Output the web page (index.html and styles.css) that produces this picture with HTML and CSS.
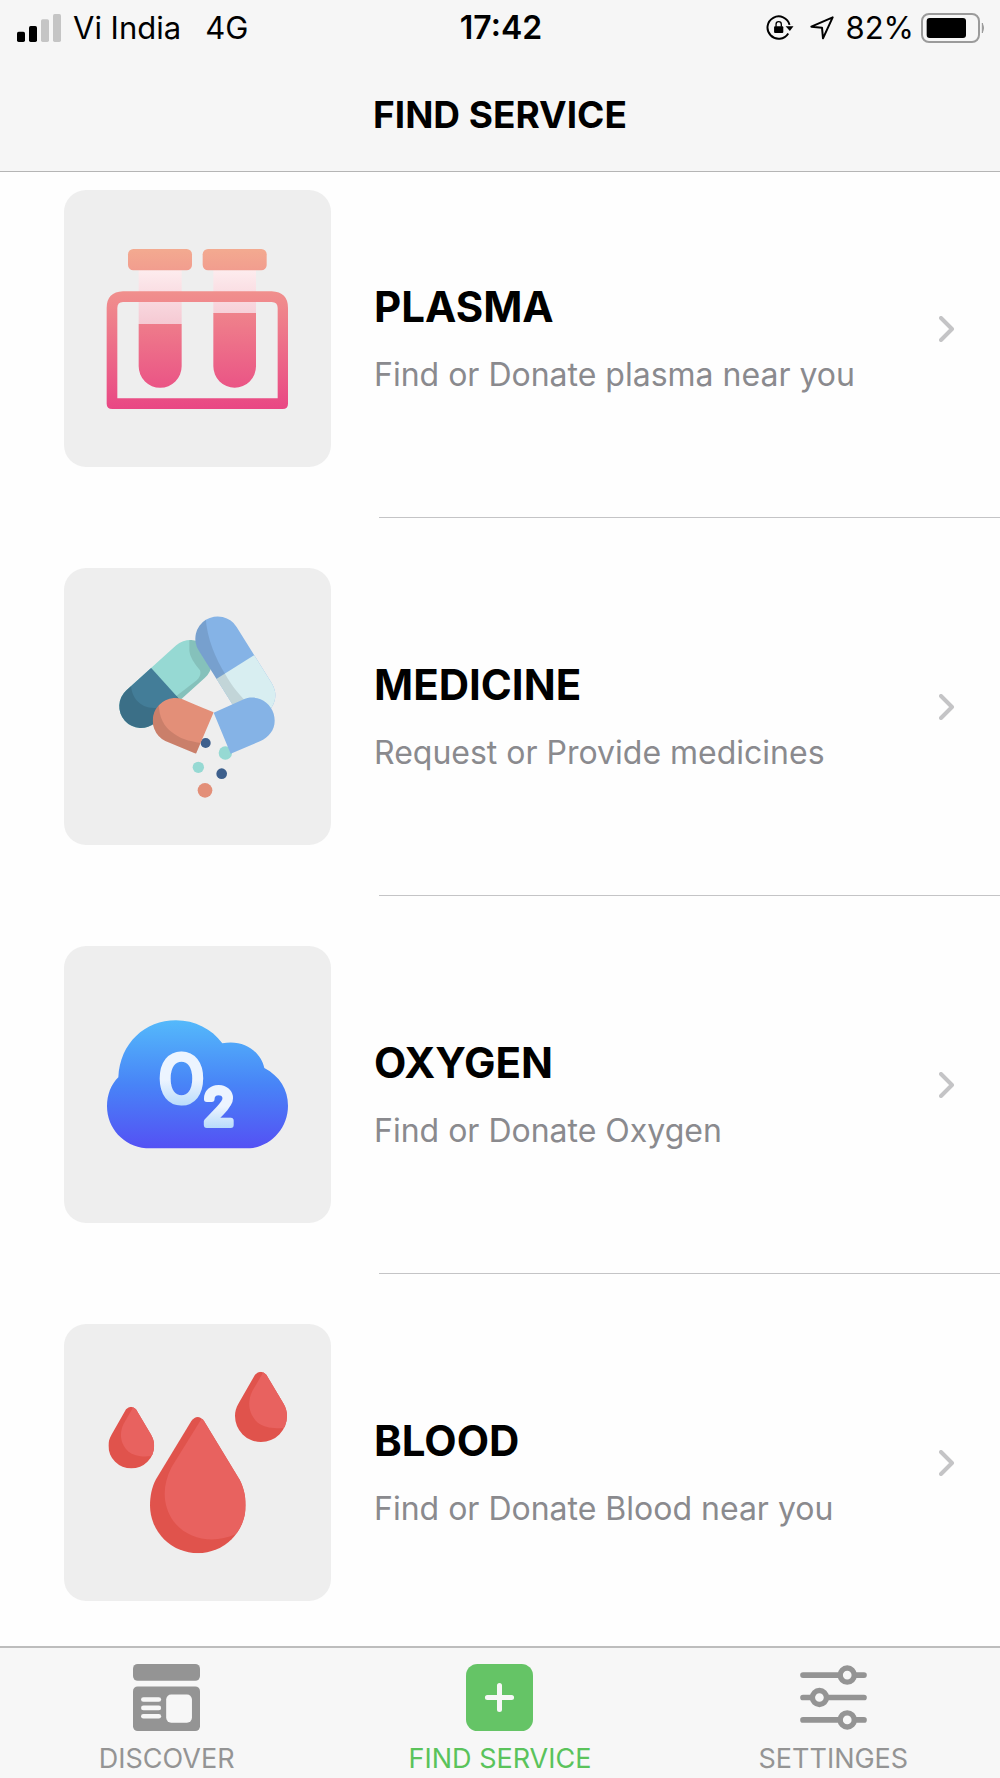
FILE: index.html
```html
<!DOCTYPE html>
<html lang="en">
<head>
<meta charset="utf-8">
<meta name="viewport" content="width=device-width, initial-scale=1">
<title>Find Service</title>
<link rel="stylesheet" href="styles.css">
</head>
<body>
<header class="header">
  <div class="status">
    <div class="status-left">
      <svg class="signal" viewBox="0 0 132 84" aria-hidden="true">
        <rect y="53" width="24" height="31" rx="5"/>
        <rect x="36" y="36" width="24" height="48" rx="5"/>
        <g fill="#c5c5c5"><rect x="72" y="16" width="24" height="68" rx="5"/><rect x="108" width="24" height="84" rx="5"/></g>
      </svg>
      <span class="carrier">Vi India</span>
      <span>4G</span>
    </div>
    <time class="clock">17:42</time>
    <div class="status-right">
      <svg class="lock" viewBox="0 0 84 76" aria-hidden="true">
        <path d="M71 30A34 34 0 1 0 67 56" fill="none" stroke="#000" stroke-width="6"/>
        <path d="M59 34H83L72 49Z"/>
        <rect x="24" y="34" width="28" height="21" rx="3"/>
        <path d="M30 36V28a8 8 0 0 1 16 0V36" fill="none" stroke="#000" stroke-width="4"/>
      </svg>
      <svg class="arrow" viewBox="0 0 72 72" aria-hidden="true">
        <path d="M4 32L68 4L39 67L36 35Z" fill="none" stroke="#000" stroke-width="6" stroke-linejoin="round"/>
      </svg>
      <span>82%</span>
      <svg class="battery" viewBox="0 0 192 90" aria-hidden="true">
        <rect x="3" y="3" width="171" height="84" rx="21" fill="none" stroke="#9b9b9b" stroke-width="6"/>
        <rect x="17" y="15" width="118" height="60" rx="9"/>
        <path d="M184 30Q191 45 184 60Z" fill="#9b9b9b" stroke="#9b9b9b" stroke-width="3"/>
      </svg>
    </div>
  </div>
  <h1 class="title">FIND SERVICE</h1>
</header>

<main>
  <ul class="list">
    <li class="item">
      <a class="row" href="#plasma">
        <svg class="card" viewBox="42 27 801 831" aria-hidden="true">
          <defs>
            <linearGradient id="tube" gradientUnits="userSpaceOnUse" x1="0" y1="204" x2="0" y2="684"><stop stop-color="#f3aa90"/><stop offset="1" stop-color="#e94784"/></linearGradient>
            <linearGradient id="glass" gradientUnits="userSpaceOnUse" x1="0" y1="268" x2="0" y2="430"><stop stop-color="#fdecee"/><stop offset="1" stop-color="#f5c9d3"/></linearGradient>
          </defs>
          <path d="M266 268H395V430H266ZM490 268H618V398H490Z" fill="url(#glass)"/>
          <g fill="url(#tube)">
            <rect x="234" y="204" width="192" height="64" rx="16"/>
            <rect x="458" y="204" width="192" height="64" rx="16"/>
            <path d="M266 429H395V556A64.500 64.500 0 0 1 266 556ZM490 396H618V556A64 64 0 0 1 490 556Z"/>
            <path fill-rule="evenodd" d="M219 331H665Q714 333 714 381V668Q714 684 698 684H187Q170 684 170 668V381Q170 333 219 331ZM219 363Q202 363 202 381V652H683V381Q683 363 665 363Z"/>
          </g>
        </svg>
        <div class="text"><h2 class="name">PLASMA</h2><p class="note">Find or Donate plasma near you</p></div>
        <svg class="chevron" viewBox="0 0 16 26" aria-hidden="true"><path d="M2 2L13 13L2 24"/></svg>
      </a>
    </li>
    <li class="item">
      <a class="row" href="#medicine">
        <svg class="card" viewBox="42 23 801 831" aria-hidden="true">
          <defs>
            <clipPath id="pillA"><rect x="-165" y="-65" width="330" height="130" rx="65" transform="translate(347 371) rotate(-42)"/></clipPath>
            <clipPath id="pillB"><rect x="-167" y="-67" width="334" height="134" rx="67" transform="translate(556 320) rotate(58)"/></clipPath>
            <clipPath id="halfC"><path d="M491 456L438 580L346 542A68 68 0 0 1 396 416Q430 431 491 456Z"/></clipPath>
          </defs>
          <g clip-path="url(#pillA)">
            <rect x="180" y="200" width="340" height="340" fill="#96d9d3"/>
            <rect x="-180" y="-80" width="180" height="160" fill="#437d98" transform="translate(347 371) rotate(-42)"/>
            <path d="M243 370C243 410 270 448 325 442L330 520H190V370ZM418 230V272Q420 295 450 330Q455 345 440 360L378 408L400 440L510 340V230Z" fill-opacity=".11"/>
          </g>
          <g clip-path="url(#pillB)">
            <rect x="420" y="150" width="280" height="350" fill="#85b3e6"/>
            <rect x="0" y="-80" width="180" height="160" fill="#d8eef1" transform="translate(556 320) rotate(58)"/>
            <path d="M467 170C470 235 500 300 525 340C545 375 565 400 590 425L500 440L420 250V170Z" fill-opacity=".1"/>
          </g>
          <circle cx="467" cy="548" r="15" fill="#3d5f8c"/>
          <circle cx="526" cy="578" r="20" fill="#96d9d3"/>
          <g clip-path="url(#halfC)">
            <rect x="290" y="400" width="210" height="190" fill="#e38f78"/>
            <path d="M326 425C326 475 345 500 365 515C390 535 415 542 452 548V600H290V425Z" fill-opacity=".11"/>
          </g>
          <path d="M491 457L578 418C618 400 660 423 671 460C682 500 662 528 630 543L542 580Z" fill="#85b3e6"/>
          <circle cx="445" cy="621" r="17" fill="#96d9d3"/>
          <circle cx="515" cy="640" r="16" fill="#3d5f8c"/>
          <circle cx="465" cy="690" r="22" fill="#e38f78"/>
        </svg>
        <div class="text"><h2 class="name">MEDICINE</h2><p class="note">Request or Provide medicines</p></div>
        <svg class="chevron" viewBox="0 0 16 26" aria-hidden="true"><path d="M2 2L13 13L2 24"/></svg>
      </a>
    </li>
    <li class="item">
      <a class="row" href="#oxygen">
        <svg class="card" viewBox="42 19 801 831" aria-hidden="true">
          <defs>
            <linearGradient id="sky" gradientUnits="userSpaceOnUse" x1="0" y1="242" x2="0" y2="626"><stop stop-color="#54b9fb"/><stop offset=".5" stop-color="#4884f7"/><stop offset="1" stop-color="#5451f4"/></linearGradient>
            <linearGradient id="big" gradientUnits="userSpaceOnUse" x1="0" y1="420" x2="0" y2="498"><stop stop-color="#ecf4ff"/><stop offset="1" stop-color="#b9dcfb"/></linearGradient>
            <linearGradient id="small" gradientUnits="userSpaceOnUse" x1="0" y1="500" x2="0" y2="564"><stop stop-color="#ecf4ff"/><stop offset="1" stop-color="#b9dcfb"/></linearGradient>
          </defs>
          <path d="M288 626C220 620 171 565 171 500C171 465 183 435 205 413C210 310 285 242 378 242C435 242 485 268 517 311C580 298 632 335 643 385C690 410 714 450 714 498C714 566 662 620 600 626Z" fill="url(#sky)"/>
          <text class="symbol" x="394" y="488" font-size="190" fill="url(#big)" stroke="url(#big)">O</text>
          <text class="subscript" x="506" y="555" font-size="154" fill="url(#small)" stroke="url(#small)">2</text>
        </svg>
        <div class="text"><h2 class="name">OXYGEN</h2><p class="note">Find or Donate Oxygen</p></div>
        <svg class="chevron" viewBox="0 0 16 26" aria-hidden="true"><path d="M2 2L13 13L2 24"/></svg>
      </a>
    </li>
    <li class="item">
      <a class="row" href="#blood">
        <svg class="card" viewBox="42 29 801 831" aria-hidden="true">
          <defs>
            <clipPath id="bigDrop"><path d="M424 320Q443 296 462 320L568 495C580 517 587 545 587 573A143.500 143.500 0 0 1 300 573C300 545 306 517 318 495Z"/></clipPath>
            <clipPath id="smallDrop"><path d="M615 181Q632 163 649 181L700 267C708 281 711 292 711 305A78 78 0 0 1 555 305C555 292 558 281 566 267Z"/></clipPath>
            <g id="drop" clip-path="url(#smallDrop)">
              <rect x="540" y="160" width="190" height="240" fill="#e0534c"/>
              <path d="M642 170L607 230C590 265 597 300 622 324C643 342 675 344 704 340L730 330V160Z" fill="#e8625f"/>
            </g>
          </defs>
          <g clip-path="url(#bigDrop)">
            <rect x="290" y="290" width="310" height="440" fill="#e0534c"/>
            <path d="M458 308L365 458C335 515 338 575 370 620C410 675 490 690 556 660L610 620V290Z" fill="#e8625f"/>
          </g>
          <use href="#drop"/>
          <use href="#drop" transform="translate(243 277) scale(.88) translate(-632 -172)"/>
        </svg>
        <div class="text"><h2 class="name">BLOOD</h2><p class="note">Find or Donate Blood near you</p></div>
        <svg class="chevron" viewBox="0 0 16 26" aria-hidden="true"><path d="M2 2L13 13L2 24"/></svg>
      </a>
    </li>
  </ul>
</main>

<nav class="tabs">
  <a class="tab" href="#discover">
    <svg class="tab-icon" viewBox="0 0 200 200" aria-hidden="true">
      <rect width="200" height="50" rx="14" fill="#949494"/>
      <rect y="67" width="200" height="133" rx="14" fill="#949494"/>
      <g fill="#f7f7f7"><rect x="24" y="99" width="60" height="14" rx="7"/><rect x="24" y="124" width="60" height="14" rx="7"/><rect x="24" y="149" width="60" height="14" rx="7"/><rect x="99" y="91" width="77" height="84" rx="15"/></g>
    </svg>
    <span>DISCOVER</span>
  </a>
  <a class="tab tab-active" href="#find" aria-current="page">
    <svg class="tab-icon" viewBox="0 0 200 200" aria-hidden="true">
      <rect width="200" height="200" rx="34" fill="#65c466"/>
      <path d="M100 64V136M64 100H136" stroke="#f7f7f7" stroke-width="15" stroke-linecap="round"/>
    </svg>
    <span>FIND SERVICE</span>
  </a>
  <a class="tab" href="#settings">
    <svg class="tab-icon" viewBox="0 0 200 200" aria-hidden="true">
      <g fill="none" stroke="#949494" stroke-width="17" stroke-linecap="round">
        <path d="M9 33H191M9 100H191M9 167H191"/>
        <g fill="#f7f7f7" stroke-width="16"><circle cx="141" cy="33" r="21"/><circle cx="58" cy="100" r="21"/><circle cx="141" cy="167" r="21"/></g>
      </g>
    </svg>
    <span>SETTINGES</span>
  </a>
</nav>
</body>
</html>
```
FILE: styles.css
```css
* { box-sizing: border-box; }

body {
  margin: 0;
  min-height: 100vh;
  display: flex;
  flex-direction: column;
  background: #fefefe;
  color: #000;
  font-family: Inter, "Liberation Sans", sans-serif;
}

h1, h2, p, ul { margin: 0; padding: 0; }
a { color: inherit; text-decoration: none; }
svg { display: block; flex: none; }

.header {
  background: #f6f6f6;
  border-bottom: 1px solid #b5b5b5;
}

.status {
  display: grid;
  grid-template-columns: 1fr auto 1fr;
  align-items: center;
  height: 55px;
  padding: 0 15px 0 17px;
  font-size: 31px;
  line-height: 40px;
}
.status-left, .status-right { display: flex; align-items: center; }
.status-right { justify-content: flex-end; }
.signal { width: 44px; height: 28px; margin-right: 12px; }
.carrier { margin-right: 24px; }
.clock { font-size: 32px; font-weight: 600; }
.lock { width: 28px; height: 25px; margin-right: 16px; }
.arrow { width: 24px; height: 24px; margin-right: 11px; }
.battery { width: 64px; height: 30px; margin-left: 7px; }

.title {
  padding: 38px 0 34px;
  font-size: 37px;
  line-height: 44px;
  font-weight: 700;
  text-align: center;
}

main { flex: 1; }
.list { list-style: none; }
.row {
  display: flex;
  align-items: center;
  padding: 50px 45px 50px 64px;
}
.item:first-child .row { padding-top: 18px; }
.item:last-child .row { padding-bottom: 45px; }
.item:not(:last-child)::after {
  content: "";
  display: block;
  height: 1px;
  margin-left: 379px;
  background: #c4c4c6;
}

.card {
  width: 267px;
  height: 277px;
  border-radius: 22px;
  background: #eeeeee;
}
.text { flex: 1; padding: 18px 0 0 43px; }
.name {
  font-size: 42px;
  line-height: 52px;
  font-weight: 700;
}
.note {
  margin-top: 22px;
  color: #8a8a8e;
  font-size: 32px;
  line-height: 40px;
}
.chevron { width: 16px; height: 26px; }
.chevron path {
  fill: none;
  stroke: #c4c4c6;
  stroke-width: 4px;
  stroke-linecap: round;
  stroke-linejoin: round;
}
.symbol, .subscript {
  text-anchor: middle;
  stroke-linejoin: round;
}
.symbol {
  font-family: "DejaVu Sans Condensed", "DejaVu Sans", sans-serif;
  stroke-width: 15px;
}
.subscript { stroke-width: 18px; }

.tabs {
  display: grid;
  grid-template-columns: repeat(3, 1fr);
  border-top: 2px solid #bdbdbd;
  background: #f7f7f7;
}
.tab {
  display: flex;
  flex-direction: column;
  align-items: center;
  gap: 11px;
  padding: 16px 0 3px;
  color: #949494;
  font-size: 27px;
  line-height: 34px;
}
.tab-active { color: #5ac35b; }
.tab-icon { width: 67px; height: 67px; }
```
